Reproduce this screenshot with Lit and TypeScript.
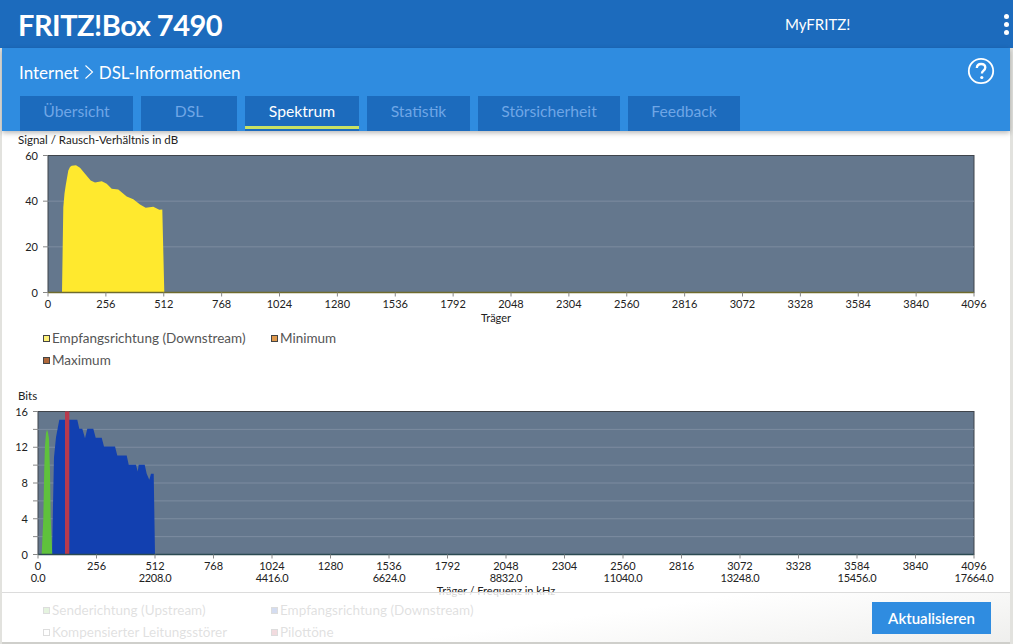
import { LitElement, html, css, svg } from 'lit';
import { customElement, property } from 'lit/decorators.js';

type Pt = [number, number];

const toPoints = (pts: Pt[]) => pts.map(([x, y]) => `${x},${y}`).join(' ');

// outlines traced from the reference, in svg coords of each chart
const SNR_SHAPE: Pt[] = [
  [62, 137], [63.3, 51.7], [64.5, 38], [65.7, 30], [68.3, 15], [70, 11.5], [71.7, 10.3], [76, 9.7], [80, 12.3], [85, 18.3],
  [90.7, 25], [95, 27], [101.7, 25.7], [106.7, 28.3], [111.7, 33.3], [118.3, 34], [126.7, 41],
  [133.3, 43.7], [140, 49], [145.7, 52.3], [153.3, 51.3], [159.3, 54.3], [162.3, 54], [164.3, 137],
];

const BITS_DOWN: Pt[] = [
  [52, 143], [54, 45.7], [56, 25.7], [59.3, 8.3], [77.3, 8.3], [79.3, 17.3], [82.3, 17.3], [85, 26.7],
  [87.3, 17.3], [93.3, 17.3], [95.7, 26.3], [101.7, 26.3], [104, 35], [115, 35], [117.3, 44], [126.7, 44],
  [128.7, 53.3], [136, 53.3], [137.7, 60], [138.7, 53.3], [144.7, 53.3], [146.7, 62.3], [149.3, 68.3],
  [151, 62.3], [153.7, 62.3], [155, 143],
];

const BITS_UP: Pt[] = [
  [41.7, 143], [43.3, 107.3], [44.2, 60], [45, 34], [46, 22], [47, 18], [48, 21], [49, 27.3], [50, 60], [50.7, 107.3], [52.3, 143],
];

const TOP_PAD = 6;

@customElement('axis-chart')
export class AxisChart extends LitElement {
  static styles = css`
    :host { display: block; }
    svg { display: block; }
    text { font-family: 'Source Sans Pro', Lato, 'Noto Sans', sans-serif; font-size: 11px; fill: #222; }
    .narrow { letter-spacing: -0.3px; }
    .axis-label { font-size: 11px; }
    .grid { stroke: #7d8ca0; stroke-width: 1; }
    .tick { stroke: #888; stroke-width: 1; }
    .frame { fill: #64778d; stroke: #3f444b; stroke-width: 1; }
  `;

  @property({ type: Number }) left = 48;
  @property({ type: Number }) plotH = 137;
  @property({ type: Number }) maxY = 60;
  @property({ type: Number }) stepY = 20;
  @property({ type: Number }) gridStep = 20;
  @property({ type: Boolean }) freq = false;
  @property() xLabel = '';
  @property({ attribute: false }) shapes: unknown = null;
  @property() baseline = '#3f444b';

  render() {
    const right = 974;
    const plotH = this.plotH;
    const y = (v: number) => (plotH * (1 - v / this.maxY));
    const x = (c: number) => this.left + ((right - this.left) * c) / 4096;
    const carriers = Array.from({ length: 17 }, (_, i) => i * 256);
    const grid: number[] = [];
    for (let v = 0; v <= this.maxY; v += this.gridStep) grid.push(v);
    const labels = grid.filter((v) => v % this.stepY === 0);
    const h = plotH + (this.freq ? 48 : 36) + TOP_PAD;

    return html`
      <svg width="1013" height=${h} viewBox="0 ${-TOP_PAD - 0.5} 1013 ${h}">
        <rect class="frame" x=${this.left} y="0" width=${right - this.left} height=${plotH}></rect>
        ${grid.filter((v) => v > 0 && v < this.maxY).map(
          (v) => svg`<line class="grid" x1=${this.left} x2=${right} y1=${y(v)} y2=${y(v)}></line>`,
        )}
        ${this.shapes}
        <line x1=${this.left} x2=${right} y1=${plotH} y2=${plotH} stroke=${this.baseline} stroke-width="1.5"></line>
        ${grid.map(
          (v) => svg`<line class="tick" x1=${this.left - 5} x2=${this.left} y1=${y(v)} y2=${y(v)}></line>`,
        )}
        ${labels.map(
          (v) => svg`<text x=${this.left - 10} y=${y(v) + 4} text-anchor="end">${v}</text>`,
        )}
        ${carriers.map(
          (c) => svg`
            <line class="tick" x1=${x(c)} x2=${x(c)} y1=${plotH} y2=${plotH + 4}></line>
            <text x=${x(c)} y=${plotH + 15} text-anchor="middle">${c}</text>
            ${this.freq && c % 512 === 0
              ? svg`<text class="narrow" x=${x(c)} y=${plotH + 27} text-anchor="middle">${((c / 4096) * 17664).toFixed(1)}</text>`
              : ''}
          `,
        )}
        <text class="axis-label" x="496" y=${plotH + (this.freq ? 40 : 29)} text-anchor="middle">${this.xLabel}</text>
      </svg>
    `;
  }
}

@customElement('app-root')
export class AppRoot extends LitElement {
  static styles = css`
    :host {
      display: block;
      position: relative;
      width: 1013px;
      height: 644px;
      overflow: hidden;
      background: #e2e2de;
      font-family: 'Source Sans Pro', Lato, 'Noto Sans', sans-serif;
      color: #fff;
    }

    .topbar {
      height: 48px;
      background: #1c6bbd;
      display: flex;
      align-items: center;
      padding: 0 19px 0 18px;
    }
    .brand { font-size: 29px; font-weight: 700; letter-spacing: -0.5px; flex: none; width: 767px; }
    .myfritz { font-size: 15px; flex: 1; }
    .dots { display: flex; flex-direction: column; gap: 3px; margin-right: -15px; }
    .dots i { width: 5px; height: 5px; border-radius: 50%; background: #fff; display: block; }

    .subbar {
      position: relative;
      z-index: 2;
      height: 83px;
      margin: 0 3px 0 2px;
      background: #2f8ce0;
      box-shadow: 0 2px 5px rgba(0, 0, 0, 0.28);
      display: flex;
      flex-direction: column;
    }
    .crumb {
      height: 48px;
      display: flex;
      align-items: center;
      justify-content: space-between;
      padding: 0 15px 0 17px;
      font-size: 17px;
    }
    .crumb span { display: flex; align-items: center; gap: 5px; }
    .help { margin-top: -3px; }

    .tabs { display: flex; gap: 8px; padding-left: 18px; }
    .tab {
      box-sizing: border-box;
      height: 35px;
      padding-bottom: 5px;
      background: #1c6bbd;
      color: #6fa6e6;
      font-size: 15.7px;
      display: flex;
      align-items: center;
      justify-content: center;
    }
    .tab.active {
      color: #fff;
      box-shadow: inset 0 -2px 0 #1c6bbd, inset 0 -5px 0 #c8e264;
    }

    main {
      margin: 0 3px 0 2px;
      background: #fff;
      height: 513px;
      overflow: hidden;
      padding-top: 2px;
      box-sizing: border-box;
    }
    .title { font-size: 11.5px; color: #222; height: 16px; line-height: 13px; padding-left: 16px; }
    main axis-chart { margin-left: -2px; }

    .legend {
      display: grid;
      grid-template-columns: 228px auto;
      justify-content: start;
      align-content: start;
      row-gap: 4px;
      padding-left: 41px;
      color: #555;
      font-size: 13.5px;
      line-height: 18px;
    }
    .legend div { display: flex; align-items: center; gap: 2px; }
    .legend i { width: 5px; height: 5px; border: 1px solid #444; display: block; flex: none; }
    .first { margin-top: 1px; height: 60px; }
    .second { margin-top: -1px; }

    .footer {
      position: absolute;
      left: 2px;
      right: 3px;
      bottom: 0;
      height: 52px;
      box-sizing: border-box;
      border-top: 1px solid #dcdcdc;
      border-bottom: 2px solid #cfcfcb;
      background: linear-gradient(172deg, rgba(255, 255, 255, 0.82) 55%, rgba(236, 236, 234, 0.85) 100%);
      display: flex;
      justify-content: flex-end;
      align-items: center;
      padding: 0 19px 0 0;
    }
    button {
      width: 119px;
      height: 32px;
      background: #2f8ce0;
      border: none;
      color: #fff;
      font: 600 15px 'Source Sans Pro', Lato, 'Noto Sans', sans-serif;
    }
  `;

  private tabs: [string, number][] = [
    ['Übersicht', 113],
    ['DSL', 96],
    ['Spektrum', 114],
    ['Statistik', 103],
    ['Störsicherheit', 142],
    ['Feedback', 112],
  ];

  render() {
    const snr = svg`
      <polygon points=${toPoints(SNR_SHAPE)} fill="#ffe92e"></polygon>
    `;
    const bits = svg`
      <polygon points=${toPoints(BITS_DOWN)} fill="#1240b0"></polygon>
      <polygon points=${toPoints(BITS_UP)} fill="#5fc13c"></polygon>
      <rect x="65" y="0" width="4.3" height="143" fill="#b93a4c"></rect>
    `;

    return html`
      <div class="topbar">
        <div class="brand">FRITZ!Box 7490</div>
        <div class="myfritz">MyFRITZ!</div>
        <div class="dots"><i></i><i></i><i></i></div>
      </div>

      <div class="subbar">
        <div class="crumb">
          <span>
            Internet
            <svg width="10" height="16" viewBox="0 0 10 16"><path d="M1.5 1.5 8.5 8l-7 6.5" fill="none" stroke="#fff" stroke-width="1.1"></path></svg>
            DSL-Informationen
          </span>
          <svg class="help" width="28" height="28" viewBox="0 0 28 28">
            <circle cx="14" cy="14" r="12.2" fill="none" stroke="#fff" stroke-width="1.8"></circle>
            <path d="M9.8 11c.2-2.6 2-4 4.3-4 2.5 0 4.2 1.5 4.2 3.6 0 3-3.4 3.2-3.4 6" fill="none" stroke="#fff" stroke-width="2.3"></path>
            <circle cx="14.8" cy="20.5" r="1.6" fill="#fff"></circle>
          </svg>
        </div>
        <div class="tabs">
          ${this.tabs.map(
            ([label, w]) => html`<div class="tab ${label === 'Spektrum' ? 'active' : ''}" style="width:${w}px">${label}</div>`,
          )}
        </div>
      </div>

      <main>
        <div class="title">Signal / Rausch-Verhältnis in dB</div>
        <axis-chart .shapes=${snr} baseline="#6f6b2e" xLabel="Träger"></axis-chart>
        <div class="legend first">
          <div><i style="background:#fff27a"></i>Empfangsrichtung (Downstream)</div>
          <div><i style="background:#e09a4e"></i>Minimum</div>
          <div><i style="background:#b0683a"></i>Maximum</div>
        </div>
        <div class="title">Bits</div>
        <axis-chart
          .shapes=${bits}
          .left=${38}
          .plotH=${143}
          .maxY=${16}
          .stepY=${4}
          .gridStep=${2}
          freq
          baseline="#2b4a52"
          xLabel="Träger / Frequenz in kHz"
        ></axis-chart>
        <div class="legend second">
          <div><i style="background:#6fc04e"></i>Senderichtung (Upstream)</div>
          <div><i style="background:#1240b0"></i>Empfangsrichtung (Downstream)</div>
          <div><i style="background:#fff"></i>Kompensierter Leitungsstörer</div>
          <div><i style="background:#b93a4c"></i>Pilottöne</div>
        </div>
      </main>

      <div class="footer"><button>Aktualisieren</button></div>
    `;
  }
}
